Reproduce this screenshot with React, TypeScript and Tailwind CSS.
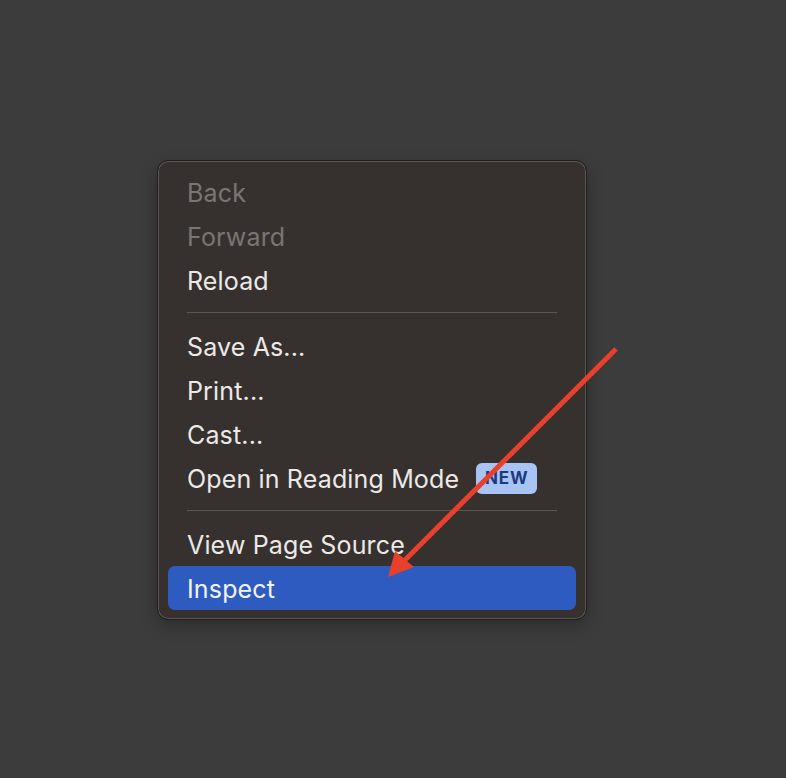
import React from "react";

type Item = { label: string; disabled?: boolean; active?: boolean; badge?: string };

const groups: Item[][] = [
  [{ label: "Back", disabled: true }, { label: "Forward", disabled: true }, { label: "Reload" }],
  [{ label: "Save As..." }, { label: "Print..." }, { label: "Cast..." }, { label: "Open in Reading Mode", badge: "NEW" }],
  [{ label: "View Page Source" }, { label: "Inspect", active: true }],
];

function Row({ item }: { item: Item }) {
  return (
    <div
      className={
        "h-[44px] flex items-center pl-[19px] rounded-[7px] text-[25px] tracking-[0.15px] leading-none " +
        (item.active ? "bg-[#2e5bc0] text-[#f1f3f8] " : "") +
        (item.disabled ? "text-[#7b7573]" : item.active ? "" : "text-[#ece9e7]")
      }
    >
      <span className="pt-[2px]">{item.label}</span>
      {item.badge && (
        <span className="ml-[17px] h-[31px] w-[61px] rounded-[6px] bg-[#a9c4f4] text-[#1c3a82] text-[17px] font-bold tracking-[0.8px] flex items-center justify-center">
          {item.badge}
        </span>
      )}
    </div>
  );
}

export default function App() {
  return (
    <div
      className="relative w-[786px] h-[778px] bg-[#3c3c3c] pt-[160px] pl-[157px] overflow-hidden"
      style={{ fontFamily: "Inter, 'Noto Sans', sans-serif" }}
    >
      <div className="w-[430px] rounded-[11px] border border-[#1e1e1e] bg-[#36312f] pl-[10px] pr-[10px] py-[9px] shadow-[inset_0_0_0_1px_#5e5855,0_6px_16px_rgba(0,0,0,0.25)]">
        {groups.map((g, gi) => (
          <div key={gi}>
            {gi > 0 && <div className="mt-[10px] mb-[11px] mx-[19px] h-px bg-[#5e5855]" />}
            {g.map((it) => (
              <Row key={it.label} item={it} />
            ))}
          </div>
        ))}
      </div>
      <svg className="absolute left-0 top-0" width="786" height="778" viewBox="0 0 786 778">
        <line x1="616" y1="349" x2="402" y2="563" stroke="#e8402b" strokeWidth="5" strokeLinecap="butt" />
        <polygon points="388,577 395,551 414,567" fill="#e8402b" />
      </svg>
    </div>
  );
}
